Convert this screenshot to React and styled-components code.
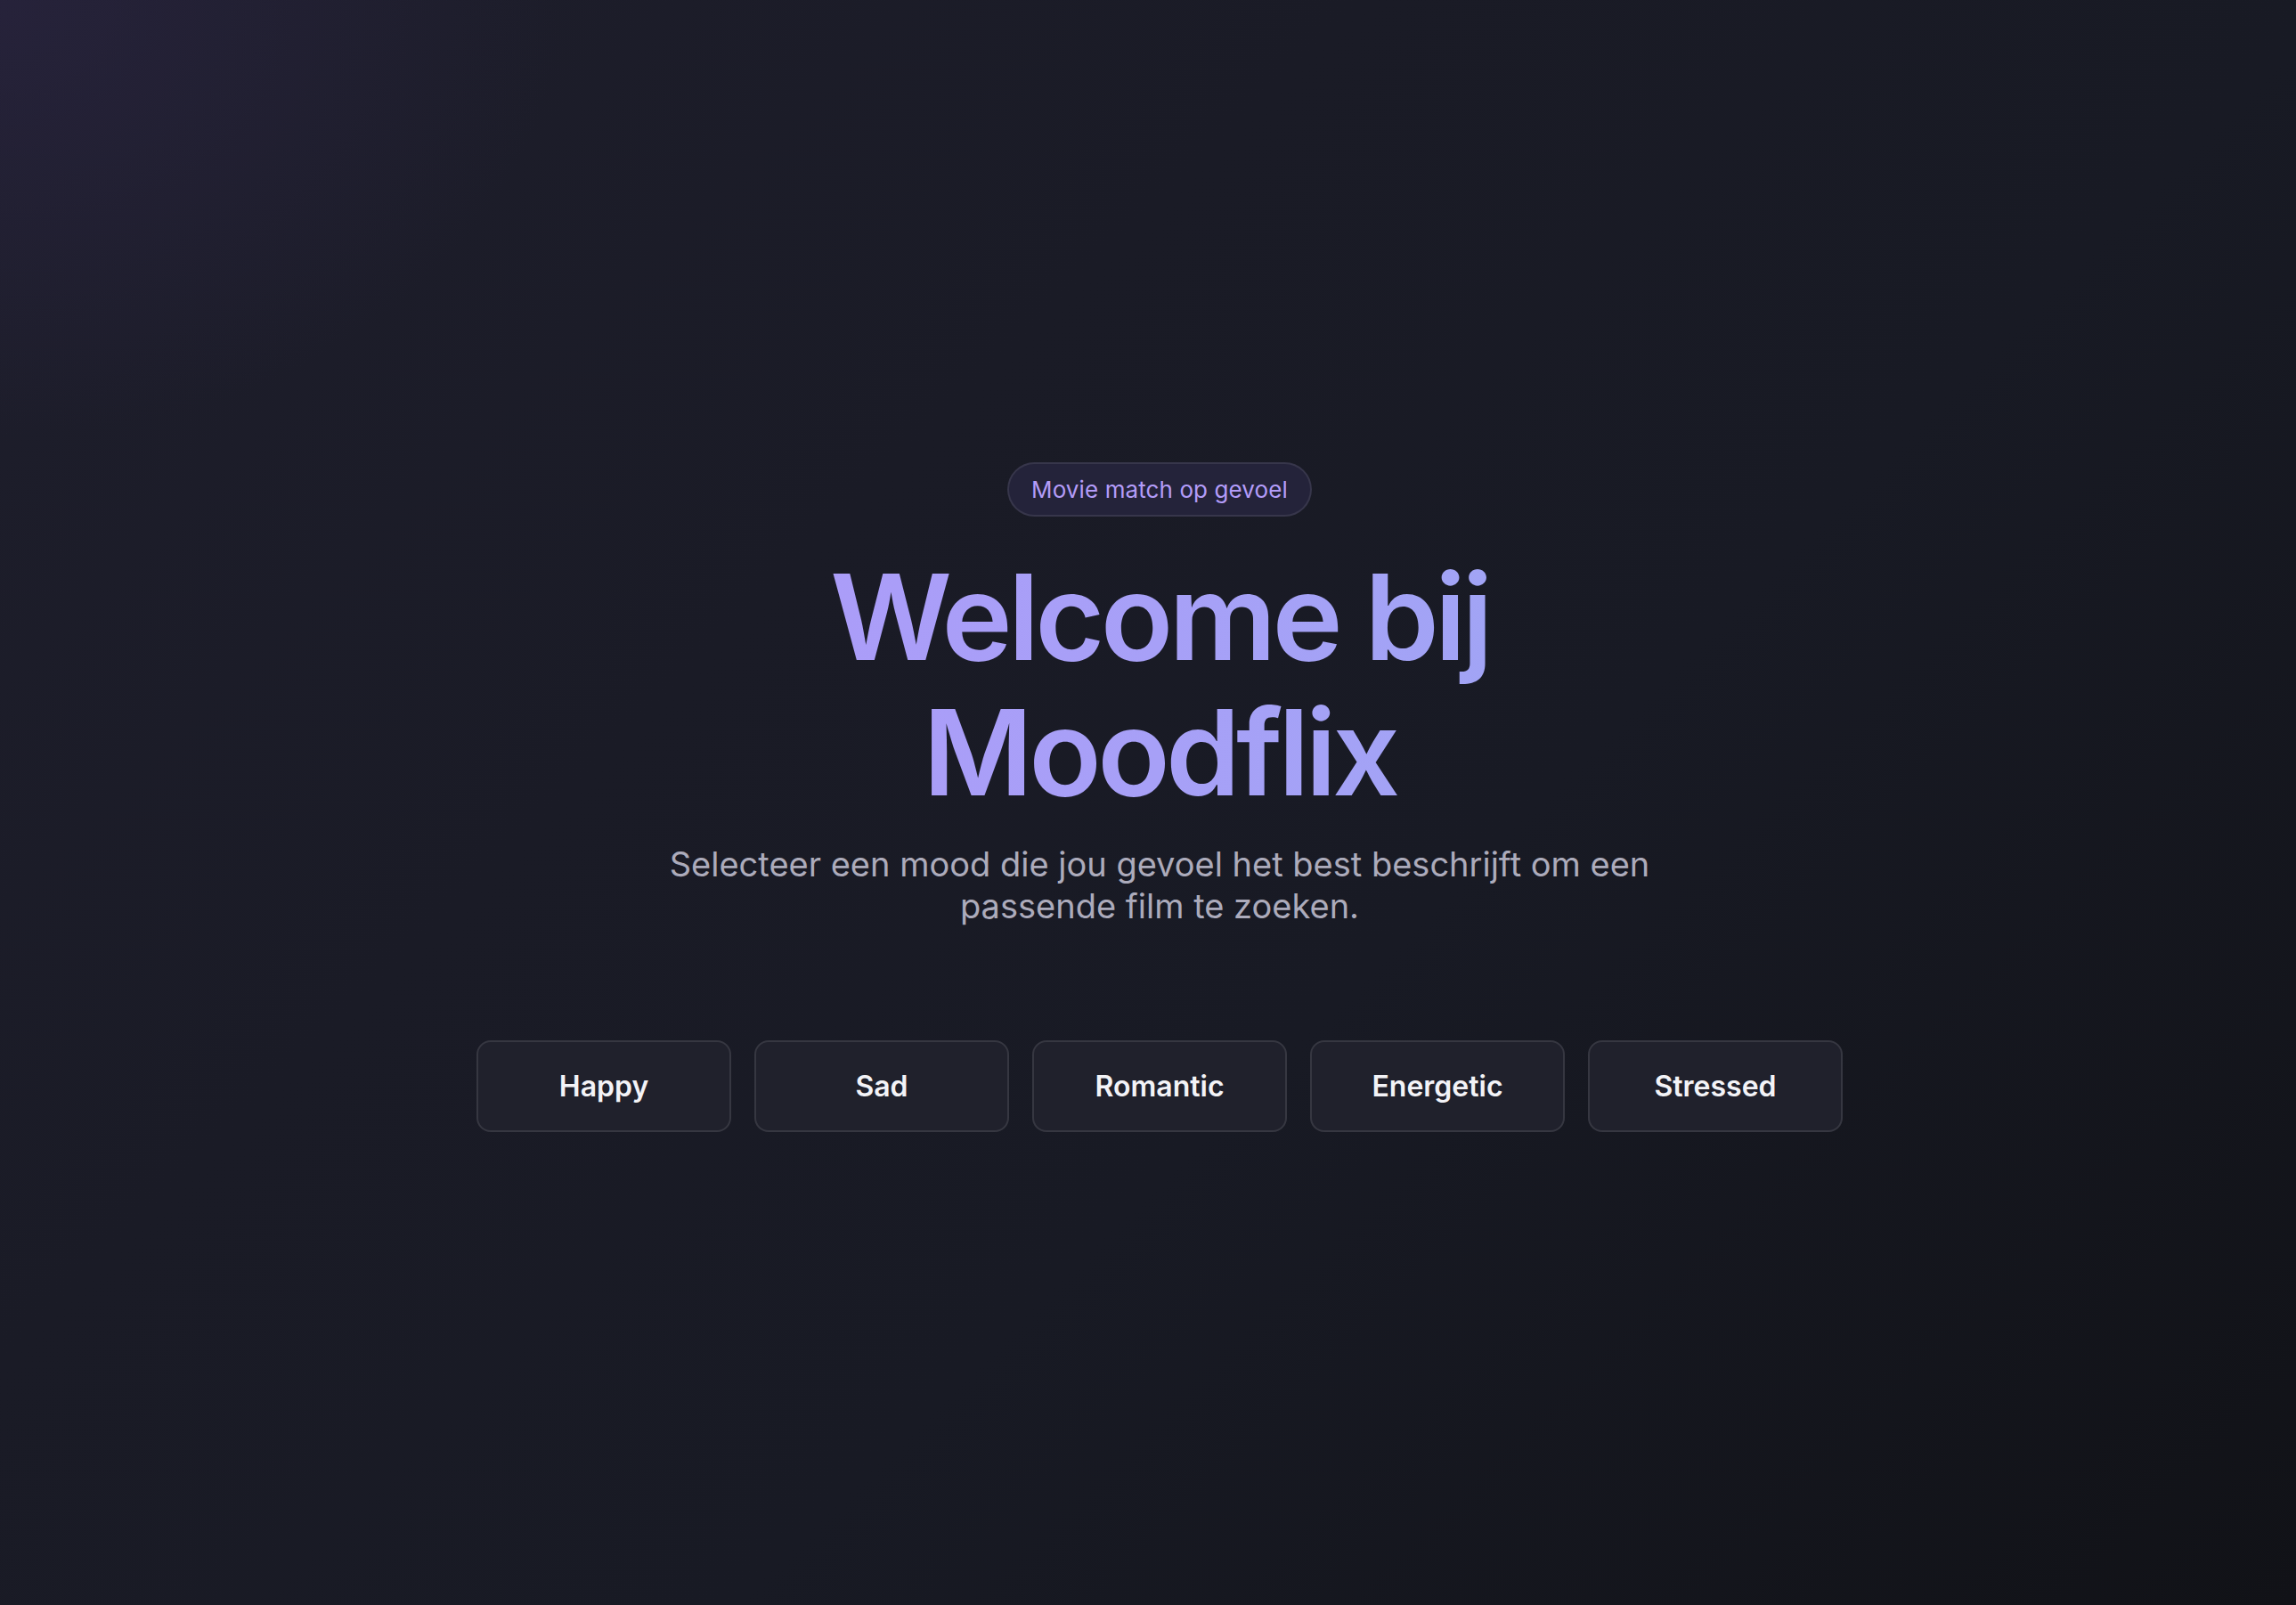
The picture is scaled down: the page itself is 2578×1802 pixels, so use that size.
import React from "react";
import styled, { createGlobalStyle } from "styled-components";

const GlobalStyle = createGlobalStyle`
  html, body {
    margin: 0;
    padding: 0;
    background: #181923;
  }
  * { box-sizing: border-box; }
`;

const Page = styled.main`
  min-height: 100vh;
  display: flex;
  align-items: center;
  justify-content: center;
  padding: 0 0 12px 26px;
  background:
    radial-gradient(ellipse 900px 700px at 0% 0%, rgba(45, 38, 70, 0.55), rgba(45, 38, 70, 0) 70%),
    linear-gradient(135deg, #1e1e2c 0%, #1a1b26 35%, #181a24 60%, #111217 100%);
  font-family: Inter, "Noto Sans", sans-serif;
`;

const Hero = styled.section`
  display: flex;
  flex-direction: column;
  align-items: center;
  text-align: center;
`;

const Badge = styled.span`
  display: inline-flex;
  align-items: center;
  height: 61px;
  padding: 0 25px;
  border-radius: 999px;
  border: 2px solid rgba(255, 255, 255, 0.09);
  background: #24233a;
  color: #b39cf8;
  font-size: 26px;
  font-weight: 400;
  letter-spacing: 0.1px;
`;

const Title = styled.h1`
  margin: 36px 0 0;
  max-width: 1180px;
  font-size: 134px;
  line-height: 152px;
  font-weight: 600;
  letter-spacing: -0.035em;
  background: linear-gradient(90deg, #ad9bf9 0%, #a7a0f7 50%, #9ea6f4 100%);
  -webkit-background-clip: text;
  background-clip: text;
  color: transparent;
`;

const Subtitle = styled.p`
  margin: 27px 0 0;
  max-width: 1140px;
  font-size: 38px;
  line-height: 47px;
  color: #acabbb;
  font-weight: 400;
`;

const MoodRow = styled.div`
  margin-top: 127px;
  display: flex;
  gap: 26px;
`;

const MoodButton = styled.button`
  width: 286px;
  height: 103px;
  border-radius: 16px;
  border: 2px solid rgba(255, 255, 255, 0.1);
  background: #20212c;
  color: #f3f3f7;
  font-family: Inter, "Noto Sans", sans-serif;
  font-size: 32px;
  font-weight: 600;
  cursor: pointer;
`;

const moods = ["Happy", "Sad", "Romantic", "Energetic", "Stressed"];

export default function App() {
  return (
    <>
      <GlobalStyle />
      <Page>
        <Hero>
          <Badge>Movie match op gevoel</Badge>
          <Title>Welcome bij Moodflix</Title>
          <Subtitle>
            Selecteer een mood die jou gevoel het best beschrijft om een passende film te zoeken.
          </Subtitle>
          <MoodRow>
            {moods.map((m) => (
              <MoodButton key={m}>{m}</MoodButton>
            ))}
          </MoodRow>
        </Hero>
      </Page>
    </>
  );
}
